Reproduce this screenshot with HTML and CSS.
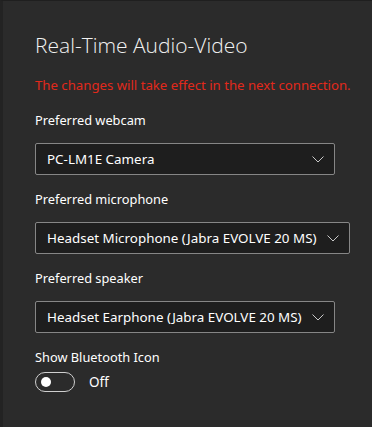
FILE: index.html
```html
<!DOCTYPE html>
<html lang="en">
<head>
    <meta charset="UTF-8">
    <meta name="viewport" content="width=device-width, initial-scale=1.0">
    <title>Real-Time Audio-Video</title>
    <link rel="stylesheet" href="styles.css">
</head>
<body>
    <div class="panel">
        <h2>Real-Time Audio-Video</h2>
        <p class="warning">The changes will take effect in the next connection.</p>

        <label class="field-label first">Preferred webcam</label>
        <div class="dropdown">
            <span>PC-LM1E Camera</span>
            <svg class="chevron" width="12" height="7" viewBox="0 0 12 7"><path d="M0.5 0.5 L6 6 L11.5 0.5" fill="none" stroke="#c8c8c8" stroke-width="1"/></svg>
        </div>

        <label class="field-label">Preferred microphone</label>
        <div class="dropdown">
            <span>Headset Microphone (Jabra EVOLVE 20 MS)</span>
            <svg class="chevron" width="12" height="7" viewBox="0 0 12 7"><path d="M0.5 0.5 L6 6 L11.5 0.5" fill="none" stroke="#c8c8c8" stroke-width="1"/></svg>
        </div>

        <label class="field-label">Preferred speaker</label>
        <div class="dropdown">
            <span>Headset Earphone (Jabra EVOLVE 20 MS)</span>
            <svg class="chevron" width="12" height="7" viewBox="0 0 12 7"><path d="M0.5 0.5 L6 6 L11.5 0.5" fill="none" stroke="#c8c8c8" stroke-width="1"/></svg>
        </div>

        <label class="field-label">Show Bluetooth Icon</label>
        <div class="toggle-row">
            <div class="toggle"><div class="knob"></div></div>
            <span>Off</span>
        </div>
    </div>
</body>
</html>
```

FILE: styles.css
```css
body {
    margin: 0;
    background-color: #2b2b2b;
    font-family: "Noto Sans", sans-serif;
    color: #ffffff;
    height: 100vh;
    box-sizing: border-box;
    border-top: 1px solid #1f1f1f;
    border-left: 3px solid #232323;
}

.panel {
    display: flex;
    flex-direction: column;
    align-items: flex-start;
    padding: 0 0 0 32px;
}

h2 {
    font-family: "Open Sans", sans-serif;
    font-weight: 300;
    font-size: 21px;
    line-height: 28px;
    margin: 30px 0 0 0;
    color: #f2f2f2;
}

.warning {
    color: #e2291b;
    font-size: 13.2px;
    line-height: 18px;
    margin: 17px 0 0 0;
}

.field-label {
    font-size: 12.8px;
    line-height: 20px;
    margin-top: 14px;
    color: #ffffff;
}

.field-label.first {
    margin-top: 16px;
}

.dropdown {
    display: flex;
    align-items: center;
    justify-content: space-between;
    box-sizing: border-box;
    min-width: 300px;
    height: 32px;
    margin-top: 13px;
    padding: 0 10px 0 11px;
    background-color: #1e1e1e;
    border: 1px solid #868686;
    border-radius: 2px;
    font-size: 13.4px;
}

.chevron {
    margin-left: 10px;
}

.toggle-row {
    display: flex;
    align-items: center;
    margin-top: 5px;
    font-size: 13.5px;
}

.toggle {
    width: 40px;
    height: 20px;
    box-sizing: border-box;
    border: 1px solid #cfcfcf;
    border-radius: 10px;
    display: flex;
    align-items: center;
    padding-left: 5px;
}

.knob {
    width: 10px;
    height: 10px;
    border-radius: 50%;
    background-color: #ffffff;
}

.toggle-row span {
    margin-left: 14px;
}
```
